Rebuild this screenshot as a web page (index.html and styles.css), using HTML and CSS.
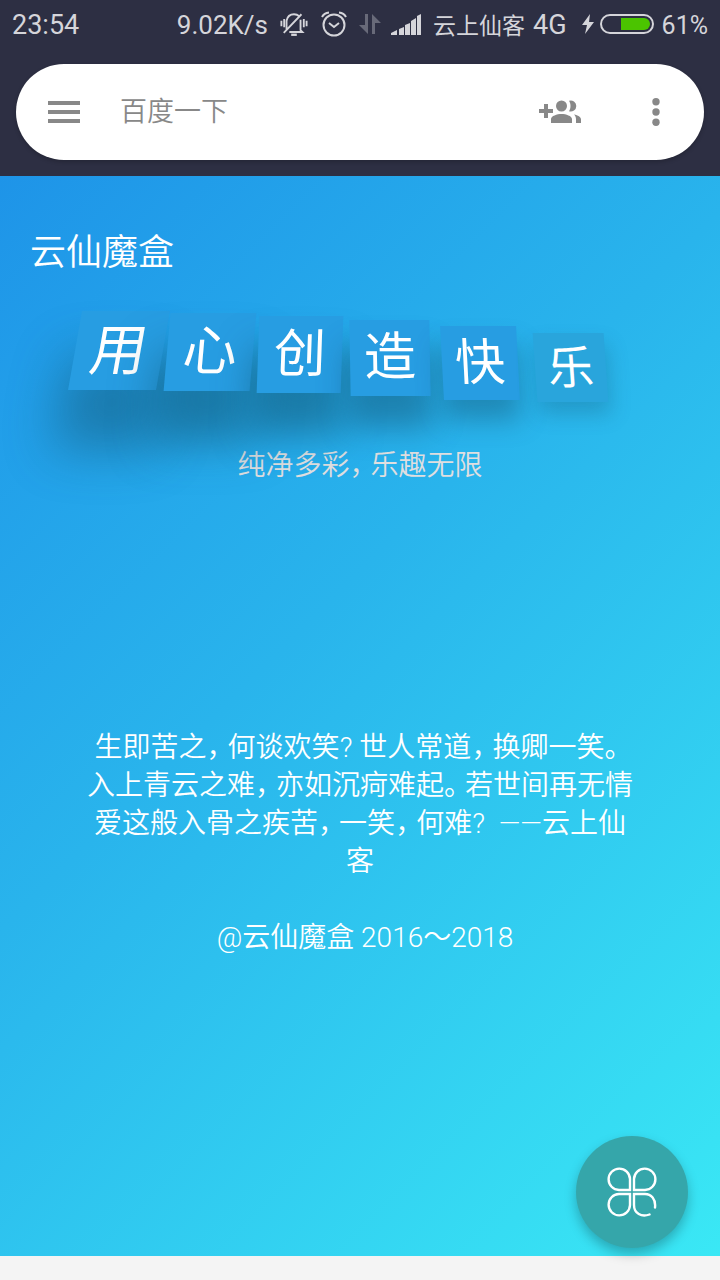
FILE: index.html
```html
<!DOCTYPE html>
<html lang="zh-CN">
<head>
<meta charset="utf-8">
<meta name="viewport" content="width=device-width, initial-scale=1">
<title>云仙魔盒</title>
<link rel="stylesheet" href="styles.css">
</head>
<body>
<div class="status">
  <span class="clock">23:54</span>
  <span class="speed">9.02K/s</span>
  <svg class="ic-bell" width="28" height="25" viewBox="0 0 30 26" fill="none" stroke="currentColor" stroke-width="2"><path d="M7 18V9C8 4 11 2 15 2c2 0 4 .6 5.500 2M22 8v11l2 2H10M4 22 23 2"/><path d="M1.500 9v6M4.500 7v9M25.500 7v9M28.500 9v6" stroke-width="2"/><path d="M12 24h6" stroke-width="2.500"/></svg>
  <svg class="ic-alarm" width="26" height="26" viewBox="0 0 26 26" fill="none" stroke="currentColor" stroke-width="2"><circle cx="13" cy="14" r="10.500"/><path d="m8 12 5 4 5-4M1 6Q3 2 8 1.500M25 6Q23 2 18 1.500"/></svg>
  <svg class="ic-data" width="22" height="22" viewBox="0 0 22 22" fill="currentColor"><path d="M6 1h3v20L0 12h6zM13 1l9 9h-6v11h-3z"/></svg>
  <svg class="ic-signal" width="30" height="21" viewBox="0 0 30 21" fill="currentColor"><path d="M0 21v-2l6-3v5zM8 15l5-2v8H8zM14 11l5-2v12h-5zM20 7l5-3v17h-5zM26 2l4-2v21h-4z"/></svg>
  <span class="carrier">云上仙客</span>
  <span class="net">4G</span>
  <svg class="ic-bolt" width="12" height="20" viewBox="0 0 12 20" fill="currentColor"><path d="M8 0 0 11h5L3 20l9-12H7z"/></svg>
  <svg class="ic-battery" width="54" height="20" viewBox="0 0 54 20"><rect x="1" y="1" width="52" height="18" rx="9" fill="none" stroke="currentColor" stroke-width="2"/><path d="M21 4h23a6 6 0 0 1 0 12H21z" fill="#4bc400"/></svg>
  <span class="percent">61%</span>
</div>
<header class="top">
  <form class="search">
    <button class="icon-btn" type="button" aria-label="菜单"><svg width="32" height="22" viewBox="0 0 32 22" fill="#888"><path d="M0 0h32v4H0zM0 9h32v4H0zM0 18h32v4H0z"/></svg></button>
    <input class="query" type="text" aria-label="搜索" placeholder="百度一下">
    <button class="icon-btn" type="button" aria-label="添加好友"><svg width="42" height="24" viewBox="0 0 42 24" fill="#888"><path d="M5 4h4v5h5v4H9v5H5v-5H0V9h5z"/><circle cx="22.500" cy="6" r="5.500"/><path d="M30 .800a5.500 5.500 0 1 1 0 10.400c2-3 2-7.400 0-10.400zM12 23v-4c0-3 6-5 10.500-5S33 16 33 19v4zM35 14.500c4 .5 7 2.500 7 5V23h-5v-3.500c0-2-.5-3.700-2-5z"/></svg></button>
    <button class="icon-btn more" type="button" aria-label="更多"><svg width="8" height="28" viewBox="0 0 8 28" fill="#888"><circle cx="4" cy="3.800" r="3.700"/><circle cx="4" cy="14" r="3.700"/><circle cx="4" cy="24.300" r="3.700"/></svg></button>
  </form>
</header>
<main class="page">
  <h1 class="title">云仙魔盒</h1>
  <div class="tiles">
    <span class="tile t1">用</span><span class="tile t2">心</span><span class="tile t3">创</span><span class="tile t4">造</span><span class="tile t5">快</span><span class="tile t6">乐</span>
  </div>
  <p class="slogan">纯净多彩<span class="mark">，</span>乐趣无限</p>
  <p class="poem">生即苦之<span class="mark">，</span>何谈欢笑<span class="mark">?</span>世人常道<span class="mark">，</span>换卿一笑<span class="mark">。</span>入上青云之难<span class="mark">，</span>亦如沉疴难起<span class="mark">。</span>若世间再无情爱这般入骨之疾苦<span class="mark">，</span>一笑<span class="mark">，</span>何难<span class="mark">?</span> ——云上仙客</p>
  <p class="copy">@云仙魔盒 2016～2018</p>
</main>
<div class="base"></div>
<button class="fab" type="button" aria-label="功能"><svg width="50" height="50" viewBox="0 0 50 50" fill="none" stroke="#fff" stroke-width="2.400" stroke-linecap="round"><path d="M23 23H12A10.700 10.700 0 1 1 23 12zM27 23V12A10.700 10.700 0 1 1 38 23zM23 27V38A10.700 10.700 0 1 1 12 27zM42.500 47.500c-8 3-15.500-1-15.500-9.500V27H38c6 0 11 5 10 13.500"/></svg></button>
</body>
</html>
```
FILE: styles.css
```css
* { box-sizing: border-box; }
body {
  margin: 0;
  min-height: 100vh;
  display: flex;
  flex-direction: column;
  background: #2d2f43;
  font-family: Roboto, "Noto Sans CJK SC", sans-serif;
}
h1, p { margin: 0; font-weight: 350; }
button { border: 0; padding: 0; background: none; cursor: pointer; }
svg { display: block; flex: none; }

.status {
  display: flex;
  align-items: center;
  height: 48px;
  padding: 0 12px;
  color: #d5d5da;
  font-size: 26px;
  white-space: nowrap;
}
.clock, .speed, .net, .percent { padding-top: 2px; }
.clock { margin-right: auto; font-size: 27px; }
.ic-bell { margin-left: 12px; }
.ic-alarm { margin-left: 13px; }
.ic-data { margin-left: 12px; color: #686a79; }
.ic-signal { margin-left: 10px; }
.carrier { margin-left: 12px; font-size: 23px; }
.net { margin-left: 8px; font-size: 27px; }
.ic-bolt { margin-left: 15px; }
.ic-battery { margin-left: 6px; }
.percent { margin-left: 8px; font-size: 25px; }

.top { padding: 16px; }
.search {
  display: flex;
  align-items: center;
  height: 96px;
  padding: 0 44px 0 32px;
  border-radius: 48px;
  background: #fff;
  box-shadow: 0 2px 4px rgba(0, 0, 0, .2);
}
.query {
  flex: 1;
  min-width: 0;
  margin: 0 16px 0 40px;
  padding: 0;
  border: 0;
  outline: 0;
  background: none;
  font: 350 27px/40px Roboto, "Noto Sans CJK SC", sans-serif;
}
.query::placeholder { color: #888; opacity: 1; }
.more { margin-left: 71px; }

.page {
  flex: 1;
  padding: 50px 0 48px;
  background: linear-gradient(135deg, #1e94e8, #29b4ec 42%, #3ae8f5);
  color: #fff;
  font-size: 28px;
  line-height: 38px;
}
.title {
  padding: 0 30px;
  font-size: 36px;
  line-height: 54px;
}
.tiles {
  display: flex;
  align-items: flex-start;
  padding: 31px 0 0 75px;
}
.tile {
  display: flex;
  align-items: center;
  justify-content: center;
  background: #279de2;
}
.t1 { width: 88px; height: 79px; font-size: 56px; transform: skewX(-10deg); box-shadow: 2px 52px 50px 8px rgba(18, 82, 110, .48); }
.t2 { width: 86px; height: 78px; margin: 2px 0 0 4px; font-size: 54px; transform: skewX(-5deg); box-shadow: 0 46px 44px 6px rgba(18, 82, 110, .52); }
.t3 { width: 84px; height: 77px; margin: 5px 0 0 5px; font-size: 52px; transform: skewX(-2deg); box-shadow: 0 38px 36px 4px rgba(18, 82, 110, .52); }
.t4 { width: 80px; height: 76px; margin: 9px 0 0 8px; font-size: 52px; transform: skewX(1deg); box-shadow: 0 30px 30px 2px rgba(18, 82, 110, .48); }
.t5 { width: 76px; height: 74px; margin: 15px 0 0 12px; font-size: 50px; transform: skewX(3deg); box-shadow: 0 20px 26px rgba(18, 82, 110, .42); }
.t6 { width: 71px; height: 69px; margin: 22px 0 0 17px; font-size: 46px; transform: skewX(4deg); background: #29a5dc; box-shadow: 2px 12px 20px rgba(18, 82, 110, .28); }

.slogan {
  margin-top: 45px;
  color: #e0dfe0;
  text-align: center;
}
.poem {
  margin-top: 244px;
  padding: 0 84px;
  text-align: center;
}
.mark {
  margin-right: 7px;
  font-feature-settings: "halt";
}
.copy {
  margin-top: 38px;
  padding-left: 10px;
  text-align: center;
}
.base { height: 24px; background: #f4f4f4; }
.fab {
  position: fixed;
  right: 32px;
  bottom: 32px;
  display: flex;
  align-items: center;
  justify-content: center;
  width: 112px;
  height: 112px;
  border-radius: 50%;
  background: #35a6aa;
  box-shadow: 0 6px 12px rgba(0, 0, 0, .25);
}
```
